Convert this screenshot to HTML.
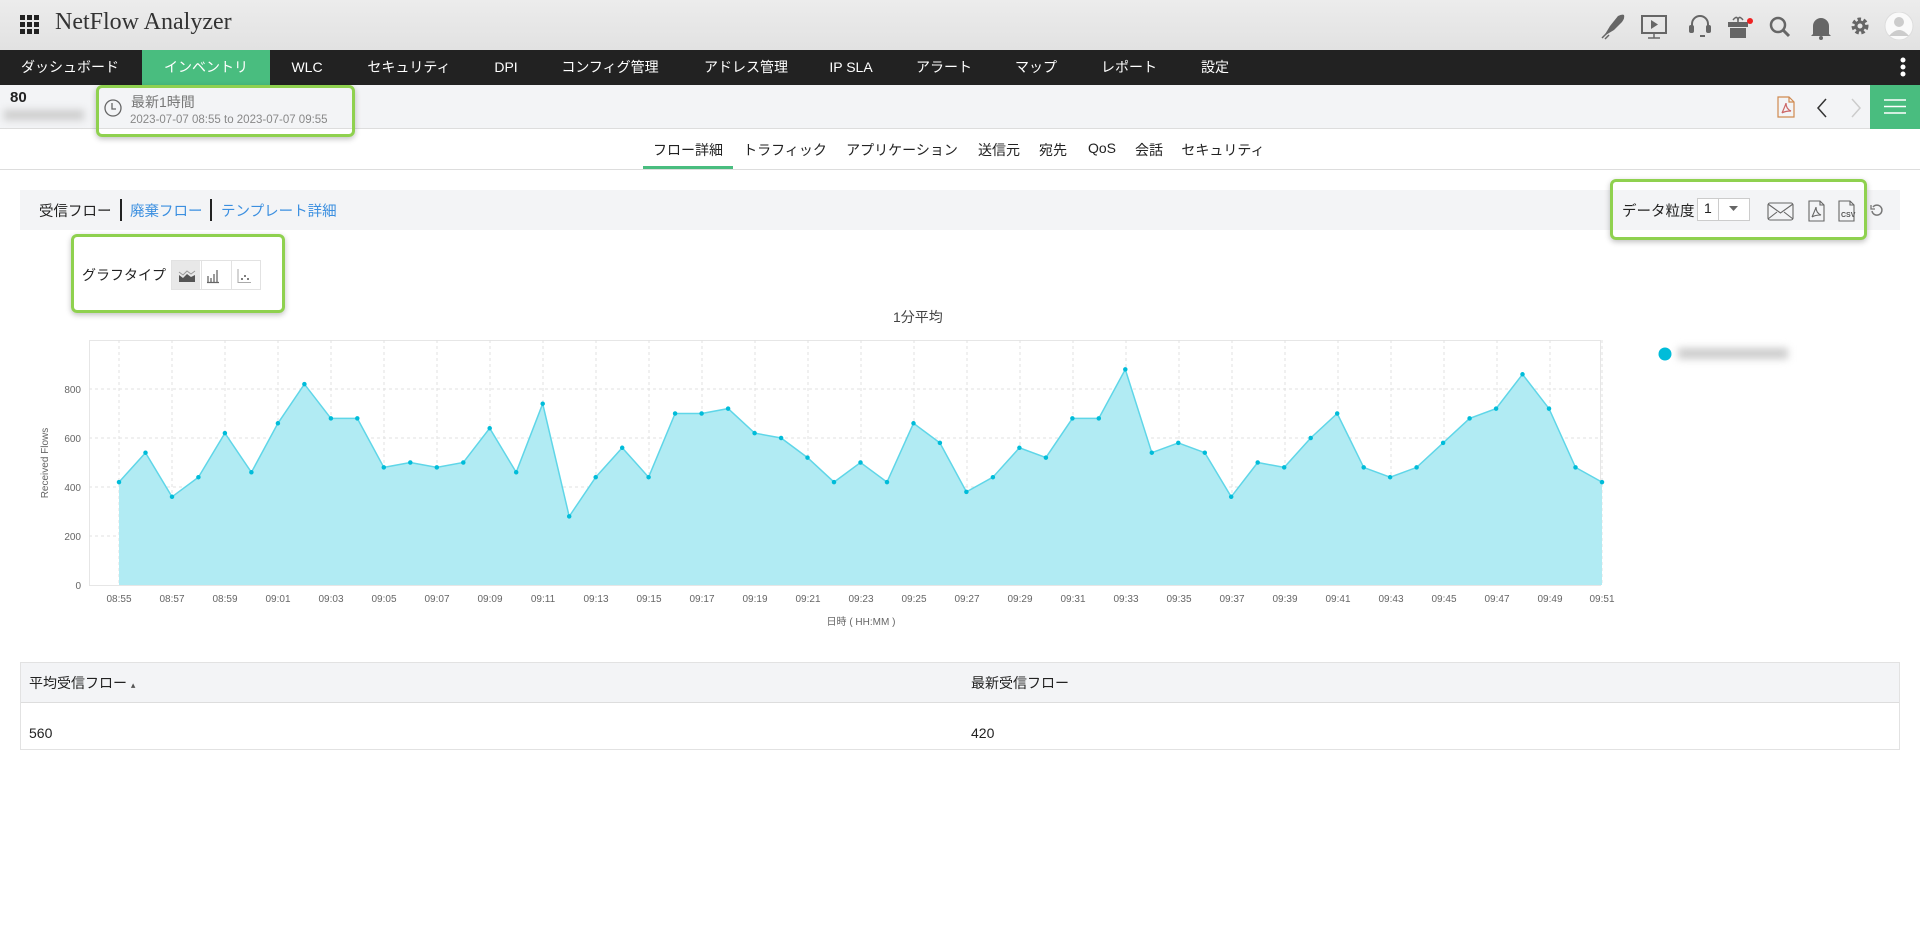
<!DOCTYPE html>
<html><head><meta charset="utf-8"><style>
*{margin:0;padding:0;box-sizing:border-box}
body{width:1920px;height:937px;background:#fff;font-family:"Liberation Sans","Noto Sans CJK JP",sans-serif;position:relative;overflow:hidden;color:#222}
.a{position:absolute;white-space:nowrap}
#top{position:absolute;left:0;top:0;width:1920px;height:50px;background:linear-gradient(#ececec,#e2e2e2)}
#nav{position:absolute;left:0;top:50px;width:1920px;height:35px;background:#222}
.n{position:absolute;top:0;height:35px;line-height:35px;color:#fff;font-size:14px;transform:translateX(-50%)}
#sub{position:absolute;left:0;top:85px;width:1920px;height:44px;background:#f3f4f6;border-bottom:1px solid #ddd}
.t{position:absolute;top:140px;font-size:14px;color:#222;transform:translateX(-50%)}
.gb{position:absolute;border:3px solid #8fd14f;border-radius:6px;box-shadow:0 2px 6px rgba(0,0,0,.25)}
</style></head><body>
<div id="top"></div>
<svg class="a" style="left:20px;top:15px" width="19" height="19" viewBox="0 0 19 19" fill="#222"><rect x="0" y="0" width="5" height="5"/><rect x="7" y="0" width="5" height="5"/><rect x="14" y="0" width="5" height="5"/><rect x="0" y="7" width="5" height="5"/><rect x="7" y="7" width="5" height="5"/><rect x="14" y="7" width="5" height="5"/><rect x="0" y="14" width="5" height="5"/><rect x="7" y="14" width="5" height="5"/><rect x="14" y="14" width="5" height="5"/></svg>
<div class="a" style="left:55px;top:9px;font-family:'Liberation Serif',serif;font-size:24px;color:#333">NetFlow Analyzer</div>
<svg class="a" style="left:1600px;top:12px" width="320" height="28" viewBox="0 0 320 28" fill="#666" stroke="#666">
<path d="M4 24 L10 14 L18 4 Q22 2 24 3 Q25 6 22 10 L14 18 Z" stroke="none"/><path d="M2 26l5-5M5 27l4-4" stroke-width="1.5"/>
<rect x="42" y="4" width="24" height="17" fill="none" stroke-width="2"/><path d="M51 8l7 4.5-7 4.5z" stroke="none"/><path d="M54 21v5M48 26h12" stroke-width="1.5"/>
<path d="M92 16v-4a8 8 0 0116 0v4" fill="none" stroke-width="2"/><rect x="89" y="13" width="5" height="8" rx="2" stroke="none"/><rect x="106" y="13" width="5" height="8" rx="2" stroke="none"/><path d="M100 24h5" stroke-width="2"/>
<rect x="128" y="10" width="20" height="5" stroke="none"/><rect x="130" y="16" width="16" height="10" stroke="none"/><path d="M133 8q5-6 5 2q0-8 5-2" fill="none" stroke-width="1.5"/><circle cx="150" cy="9" r="3" fill="#e22" stroke="none"/>
<circle cx="178" cy="13" r="7" fill="none" stroke-width="2.5"/><path d="M183 18l6 6" stroke-width="3"/>
<path d="M213 22v-8a8 8 0 0116 0v8l2 2h-20z" stroke="none"/><circle cx="221" cy="26" r="2" stroke="none"/>
<circle cx="260" cy="14" r="6" fill="none" stroke-width="5" stroke-dasharray="3 2.2"/><circle cx="260" cy="14" r="4" fill="none" stroke-width="3"/>
<circle cx="299" cy="14" r="14" fill="#fafafa" stroke="#ddd" stroke-width="1"/><circle cx="299" cy="10" r="5" fill="#ccc" stroke="none"/><path d="M289 24q10-12 20 0z" fill="#ccc" stroke="none"/>
</svg>
<div id="nav">
<div class="a" style="left:142px;top:0;width:128px;height:35px;background:#49bd7f"></div>
<div class="n" style="left:70px">ダッシュボード</div><div class="n" style="left:206px">インベントリ</div><div class="n" style="left:307px">WLC</div><div class="n" style="left:409px">セキュリティ</div><div class="n" style="left:506px">DPI</div><div class="n" style="left:610px">コンフィグ管理</div><div class="n" style="left:746px">アドレス管理</div><div class="n" style="left:851px">IP SLA</div><div class="n" style="left:944px">アラート</div><div class="n" style="left:1036px">マップ</div><div class="n" style="left:1129px">レポート</div><div class="n" style="left:1215px">設定</div>
<svg class="a" style="left:1900px;top:5px" width="6" height="24"><circle cx="3" cy="5" r="2.5" fill="#fff"/><circle cx="3" cy="12" r="2.5" fill="#fff"/><circle cx="3" cy="19" r="2.5" fill="#fff"/></svg>
</div>
<div id="sub"></div>
<div class="a" style="left:10px;top:89px;font-size:15px;font-weight:bold">80</div>
<div class="a" style="left:4px;top:110px;width:80px;height:10px;background:#ccc;filter:blur(4px)"></div>
<div class="gb" style="left:96px;top:85px;width:259px;height:52px"></div>
<svg class="a" style="left:103px;top:98px" width="20" height="20"><circle cx="10" cy="10" r="8" fill="none" stroke="#666" stroke-width="1.3"/><path d="M9 5v6h4" fill="none" stroke="#666" stroke-width="1.3"/></svg>
<div class="a" style="left:131px;top:92px;font-size:14px;color:#777">最新1時間</div>
<div class="a" style="left:130px;top:114px;font-size:11.5px;color:#888">2023-07-07 08:55 to 2023-07-07 09:55</div>
<svg class="a" style="left:1776px;top:96px" width="20" height="22" fill="none" stroke="#d08a50" stroke-width="1.2"><path d="M2 1h11l5 5v15H2z"/><path d="M13 1v5h5"/><path d="M6 17q4-9 4-10q0 6 5 8q-6 0-9 2" stroke="#c66"/></svg>
<svg class="a" style="left:1814px;top:97px" width="50" height="22" fill="none" stroke-width="1.5"><path d="M12 2L4 11l8 9" stroke="#333"/><path d="M38 2l8 9-8 9" stroke="#ccc"/></svg>
<div class="a" style="left:1870px;top:85px;width:50px;height:44px;background:#49bd7f"></div>
<svg class="a" style="left:1884px;top:98px" width="22" height="17" stroke="#fff" stroke-width="1.5"><path d="M0 2h22M0 8.5h22M0 15h22"/></svg>
<div class="t" style="left:688px">フロー詳細</div><div class="t" style="left:785px">トラフィック</div><div class="t" style="left:902px">アプリケーション</div><div class="t" style="left:999px">送信元</div><div class="t" style="left:1053px">宛先</div><div class="t" style="left:1102px">QoS</div><div class="t" style="left:1149px">会話</div><div class="t" style="left:1223px">セキュリティ</div>
<div class="a" style="left:643px;top:166px;width:90px;height:3px;background:#49bd7f"></div>
<div class="a" style="left:0;top:169px;width:1920px;height:1px;background:#ddd"></div>
<div class="a" style="left:20px;top:190px;width:1880px;height:40px;background:#f3f4f6"></div>
<div class="a" style="left:39px;top:200px;font-size:14.5px">受信フロー</div>
<div class="a" style="left:120px;top:199px;width:1.5px;height:22px;background:#222"></div>
<div class="a" style="left:130px;top:200px;font-size:14.5px;color:#3b8fe0">廃棄フロー</div>
<div class="a" style="left:210px;top:199px;width:1.5px;height:22px;background:#222"></div>
<div class="a" style="left:221px;top:200px;font-size:14.5px;color:#3b8fe0">テンプレート詳細</div>
<div class="gb" style="left:1610px;top:179px;width:257px;height:61px"></div>
<div class="a" style="left:1622px;top:200px;font-size:14.5px">データ粒度</div>
<div class="a" style="left:1697px;top:198px;width:53px;height:23px;border:1px solid #ccc;background:#fff"></div>
<div class="a" style="left:1718px;top:198px;width:1px;height:23px;background:#ccc"></div>
<div class="a" style="left:1704px;top:200px;font-size:14px">1</div>
<svg class="a" style="left:1729px;top:206px" width="10" height="6"><path d="M0 0h9l-4.5 5z" fill="#666"/></svg>
<svg class="a" style="left:1767px;top:200px" width="100" height="22" fill="none" stroke="#666" stroke-width="1.1"><rect x="1" y="3" width="25" height="17" rx="2"/><path d="M1 4l12.5 9L26 4M1 19l9-7M26 19l-9-7"/><path d="M42 1h11l4 4v16H42z"/><path d="M53 1v4h4"/><path d="M45 17q4-9 4-10q0 6 5 8q-6 0-9 2"/><path d="M72 1h11l4 4v16H72z"/><path d="M83 1v4h4"/><text x="74" y="17" font-size="7" font-family="Liberation Sans" fill="#555" stroke="none" font-weight="bold">CSV</text></svg>
<svg class="a" style="left:1870px;top:203px" width="14" height="14" fill="none" stroke="#777" stroke-width="1.5"><path d="M3 4a5 5 0 11-1 4"/><path d="M1 2v4h4" stroke-width="1.3"/></svg>
<div class="gb" style="left:71px;top:234px;width:214px;height:79px"></div>
<div class="a" style="left:82px;top:265px;font-size:14px">グラフタイプ</div>
<div class="a" style="left:171px;top:260px;width:90px;height:30px;border:1px solid #e2e2e2;background:#fff"></div>
<div class="a" style="left:172px;top:261px;width:28px;height:28px;background:#e8e8e8"></div>
<div class="a" style="left:201px;top:261px;width:1px;height:28px;background:#e2e2e2"></div><div class="a" style="left:231px;top:261px;width:1px;height:28px;background:#e2e2e2"></div>
<svg class="a" style="left:178px;top:266px" width="80" height="18"><path d="M1 16V9l4 3 4-4 4 3 4-2v7z" fill="#555"/><path d="M1 6l4 3 4-4 4 3 4-3" fill="none" stroke="#999"/><path d="M30 16V10M33 16V12M36 16V8M39 16V4M29 16.5h12" stroke="#666" stroke-width="1.3"/><path d="M60 3v13.5h13" stroke="#aaa" fill="none"/><circle cx="64" cy="13" r="1" fill="#555"/><circle cx="67" cy="10" r="1" fill="#555"/><circle cx="70" cy="13" r="1" fill="#555"/></svg>
<div class="a" style="left:893px;top:307px;font-size:14px;color:#444">1分平均</div>
<svg class="a" style="left:0;top:330px" width="1920" height="300" viewBox="0 330 1920 300" font-family="Liberation Sans" font-size="10" fill="#666">
<rect x="89.5" y="340.5" width="1511" height="245" fill="none" stroke="#e6e6e6"/>
<g stroke="#e2e2e2" stroke-dasharray="3 3"><path d="M89 536h1512M89 487h1512M89 438h1512M89 389h1512"/>
<path d="M119 340v245M172 340v245M225 340v245M278 340v245M331 340v245M384 340v245M437 340v245M490 340v245M543 340v245M596 340v245M649 340v245M702 340v245M755 340v245M808 340v245M861 340v245M914 340v245M967 340v245M1020 340v245M1073 340v245M1126 340v245M1179 340v245M1232 340v245M1285 340v245M1338 340v245M1391 340v245M1444 340v245M1497 340v245M1550 340v245M1602 340v245"/></g>
<g text-anchor="end"><text x="81" y="589">0</text><text x="81" y="540">200</text><text x="81" y="491">400</text><text x="81" y="442">600</text><text x="81" y="393">800</text></g>
<text transform="translate(48 463) rotate(-90)" text-anchor="middle">Received Flows</text>
<g transform="translate(119 0)">
<polygon fill="#b1ebf3" stroke="none" points="0,585 0,482.1 26.5,452.7 53,496.8 79.4,477.2 105.9,433.1 132.4,472.3 158.9,423.3 185.4,384.1 211.9,418.4 238.3,418.4 264.8,467.4 291.3,462.5 317.8,467.4 344.3,462.5 370.7,428.2 397.2,472.3 423.7,403.7 450.2,516.4 476.7,477.2 503.2,447.8 529.6,477.2 556.1,413.5 582.6,413.5 609.1,408.6 635.6,433.1 662.1,438 688.5,457.6 715,482.1 741.5,462.5 768,482.1 794.5,423.3 820.9,442.9 847.4,491.9 873.9,477.2 900.4,447.8 926.9,457.6 953.4,418.4 979.8,418.4 1006.3,369.4 1032.8,452.7 1059.3,442.9 1085.8,452.7 1112.2,496.8 1138.7,462.5 1165.2,467.4 1191.7,438 1218.2,413.5 1244.7,467.4 1271.1,477.2 1297.6,467.4 1324.1,442.9 1350.6,418.4 1377.1,408.6 1403.5,374.3 1430,408.6 1456.5,467.4 1483,482.1 1483,585"/>
<polyline fill="none" stroke="#5fd6e8" stroke-width="1.5" points="0,482.1 26.5,452.7 53,496.8 79.4,477.2 105.9,433.1 132.4,472.3 158.9,423.3 185.4,384.1 211.9,418.4 238.3,418.4 264.8,467.4 291.3,462.5 317.8,467.4 344.3,462.5 370.7,428.2 397.2,472.3 423.7,403.7 450.2,516.4 476.7,477.2 503.2,447.8 529.6,477.2 556.1,413.5 582.6,413.5 609.1,408.6 635.6,433.1 662.1,438 688.5,457.6 715,482.1 741.5,462.5 768,482.1 794.5,423.3 820.9,442.9 847.4,491.9 873.9,477.2 900.4,447.8 926.9,457.6 953.4,418.4 979.8,418.4 1006.3,369.4 1032.8,452.7 1059.3,442.9 1085.8,452.7 1112.2,496.8 1138.7,462.5 1165.2,467.4 1191.7,438 1218.2,413.5 1244.7,467.4 1271.1,477.2 1297.6,467.4 1324.1,442.9 1350.6,418.4 1377.1,408.6 1403.5,374.3 1430,408.6 1456.5,467.4 1483,482.1"/>
<path fill="none" stroke="#00bcd9" stroke-width="4.5" stroke-linecap="round" d="M0 482.1h0M26.5 452.7h0M53 496.8h0M79.4 477.2h0M105.9 433.1h0M132.4 472.3h0M158.9 423.3h0M185.4 384.1h0M211.9 418.4h0M238.3 418.4h0M264.8 467.4h0M291.3 462.5h0M317.8 467.4h0M344.3 462.5h0M370.7 428.2h0M397.2 472.3h0M423.7 403.7h0M450.2 516.4h0M476.7 477.2h0M503.2 447.8h0M529.6 477.2h0M556.1 413.5h0M582.6 413.5h0M609.1 408.6h0M635.6 433.1h0M662.1 438h0M688.5 457.6h0M715 482.1h0M741.5 462.5h0M768 482.1h0M794.5 423.3h0M820.9 442.9h0M847.4 491.9h0M873.9 477.2h0M900.4 447.8h0M926.9 457.6h0M953.4 418.4h0M979.8 418.4h0M1006.3 369.4h0M1032.8 452.7h0M1059.3 442.9h0M1085.8 452.7h0M1112.2 496.8h0M1138.7 462.5h0M1165.2 467.4h0M1191.7 438h0M1218.2 413.5h0M1244.7 467.4h0M1271.1 477.2h0M1297.6 467.4h0M1324.1 442.9h0M1350.6 418.4h0M1377.1 408.6h0M1403.5 374.3h0M1430 408.6h0M1456.5 467.4h0M1483 482.1h0"/>
</g>
<g text-anchor="middle"><text x="119" y="602">08:55</text><text x="172" y="602">08:57</text><text x="225" y="602">08:59</text><text x="278" y="602">09:01</text><text x="331" y="602">09:03</text><text x="384" y="602">09:05</text><text x="437" y="602">09:07</text><text x="490" y="602">09:09</text><text x="543" y="602">09:11</text><text x="596" y="602">09:13</text><text x="649" y="602">09:15</text><text x="702" y="602">09:17</text><text x="755" y="602">09:19</text><text x="808" y="602">09:21</text><text x="861" y="602">09:23</text><text x="914" y="602">09:25</text><text x="967" y="602">09:27</text><text x="1020" y="602">09:29</text><text x="1073" y="602">09:31</text><text x="1126" y="602">09:33</text><text x="1179" y="602">09:35</text><text x="1232" y="602">09:37</text><text x="1285" y="602">09:39</text><text x="1338" y="602">09:41</text><text x="1391" y="602">09:43</text><text x="1444" y="602">09:45</text><text x="1497" y="602">09:47</text><text x="1550" y="602">09:49</text><text x="1602" y="602">09:51</text>
<text x="861" y="625">日時 ( HH:MM )</text></g>
<circle cx="1665" cy="354" r="6.5" fill="#00bcd9"/>
</svg>
<div class="a" style="left:1678px;top:348px;width:110px;height:11px;background:#ccc;filter:blur(4px)"></div>
<div class="a" style="left:20px;top:662px;width:1880px;height:88px;border:1px solid #e2e2e2"></div>
<div class="a" style="left:21px;top:663px;width:1878px;height:40px;background:#f3f4f6;border-bottom:1px solid #ddd"></div>
<div class="a" style="left:29px;top:673px;font-size:14px">平均受信フロー <span style="font-size:9px;color:#555">▴</span></div>
<div class="a" style="left:971px;top:673px;font-size:14px">最新受信フロー</div>
<div class="a" style="left:29px;top:725px;font-size:14px">560</div>
<div class="a" style="left:971px;top:725px;font-size:14px">420</div>
</body></html>
